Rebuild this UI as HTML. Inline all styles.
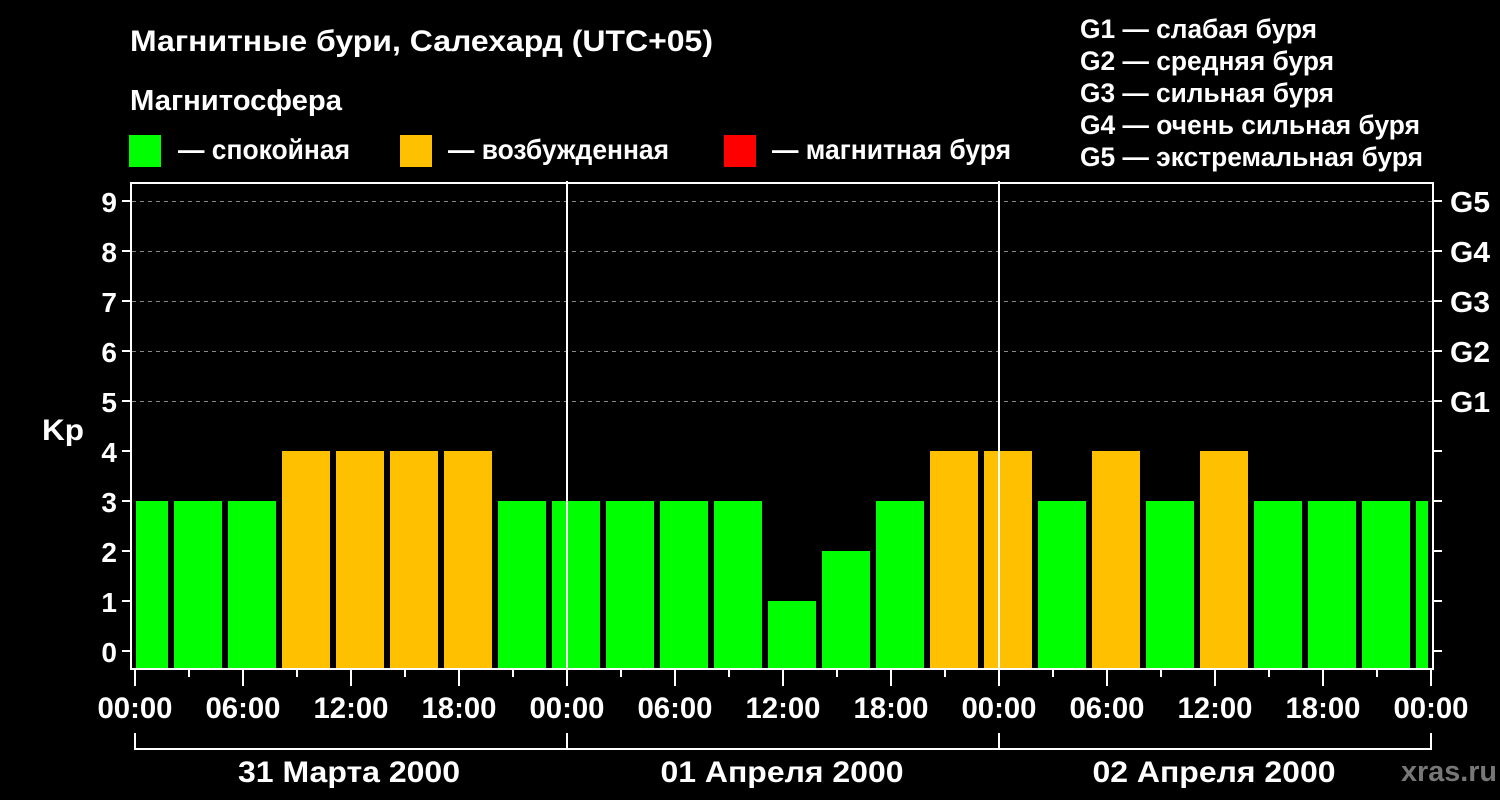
<!DOCTYPE html>
<html><head><meta charset="utf-8"><style>
html,body{margin:0;padding:0;background:#000;width:1500px;height:800px;overflow:hidden}
svg{display:block}
text{font-family:"Liberation Sans",Arial,sans-serif;font-weight:bold;fill:#fff}
</style></head><body>
<svg width="1500" height="800" viewBox="0 0 1500 800" xmlns="http://www.w3.org/2000/svg">
<rect width="1500" height="800" fill="#000"/>
<text x="130" y="51" font-size="30" textLength="583" lengthAdjust="spacingAndGlyphs">Магнитные бури, Салехард (UTC+05)</text>
<text x="130" y="110" font-size="29" textLength="212" lengthAdjust="spacingAndGlyphs">Магнитосфера</text>
<rect x="129" y="135" width="32" height="32" fill="#00ff00"/>
<text x="178" y="159" font-size="28" textLength="172" lengthAdjust="spacingAndGlyphs">— спокойная</text>
<rect x="400" y="135" width="32" height="32" fill="#ffc000"/>
<text x="448" y="159" font-size="28" textLength="221" lengthAdjust="spacingAndGlyphs">— возбужденная</text>
<rect x="724" y="135" width="32" height="32" fill="#ff0000"/>
<text x="772" y="159" font-size="28" textLength="239" lengthAdjust="spacingAndGlyphs">— магнитная буря</text>
<g font-size="27">
<text x="1080" y="38" textLength="237" lengthAdjust="spacingAndGlyphs">G1 — слабая буря</text>
<text x="1080" y="70" textLength="254" lengthAdjust="spacingAndGlyphs">G2 — средняя буря</text>
<text x="1080" y="102" textLength="254" lengthAdjust="spacingAndGlyphs">G3 — сильная буря</text>
<text x="1080" y="134" textLength="340" lengthAdjust="spacingAndGlyphs">G4 — очень сильная буря</text>
<text x="1080" y="166" textLength="343" lengthAdjust="spacingAndGlyphs">G5 — экстремальная буря</text>
</g>
<g stroke="#888" stroke-width="1" stroke-dasharray="4,4">
<line x1="132" y1="201.5" x2="1432" y2="201.5"/>
<line x1="132" y1="251.5" x2="1432" y2="251.5"/>
<line x1="132" y1="301.5" x2="1432" y2="301.5"/>
<line x1="132" y1="351.5" x2="1432" y2="351.5"/>
<line x1="132" y1="401.5" x2="1432" y2="401.5"/>
</g>
<g>
<rect x="136" y="501" width="32" height="167" fill="#00ff00"/>
<rect x="174" y="501" width="48" height="167" fill="#00ff00"/>
<rect x="228" y="501" width="48" height="167" fill="#00ff00"/>
<rect x="282" y="451" width="48" height="217" fill="#ffc000"/>
<rect x="336" y="451" width="48" height="217" fill="#ffc000"/>
<rect x="390" y="451" width="48" height="217" fill="#ffc000"/>
<rect x="444" y="451" width="48" height="217" fill="#ffc000"/>
<rect x="498" y="501" width="48" height="167" fill="#00ff00"/>
<rect x="552" y="501" width="48" height="167" fill="#00ff00"/>
<rect x="606" y="501" width="48" height="167" fill="#00ff00"/>
<rect x="660" y="501" width="48" height="167" fill="#00ff00"/>
<rect x="714" y="501" width="48" height="167" fill="#00ff00"/>
<rect x="768" y="601" width="48" height="67" fill="#00ff00"/>
<rect x="822" y="551" width="48" height="117" fill="#00ff00"/>
<rect x="876" y="501" width="48" height="167" fill="#00ff00"/>
<rect x="930" y="451" width="48" height="217" fill="#ffc000"/>
<rect x="984" y="451" width="48" height="217" fill="#ffc000"/>
<rect x="1038" y="501" width="48" height="167" fill="#00ff00"/>
<rect x="1092" y="451" width="48" height="217" fill="#ffc000"/>
<rect x="1146" y="501" width="48" height="167" fill="#00ff00"/>
<rect x="1200" y="451" width="48" height="217" fill="#ffc000"/>
<rect x="1254" y="501" width="48" height="167" fill="#00ff00"/>
<rect x="1308" y="501" width="48" height="167" fill="#00ff00"/>
<rect x="1362" y="501" width="48" height="167" fill="#00ff00"/>
<rect x="1416" y="501" width="12" height="167" fill="#00ff00"/>
</g>
<g stroke="#fff" stroke-width="2" fill="none">
<rect x="131" y="183" width="1302" height="486"/>
<line x1="567" y1="181" x2="567" y2="669"/>
<line x1="999" y1="181" x2="999" y2="669"/>
</g>
<g stroke="#fff" stroke-width="2">
<line x1="122" y1="651" x2="131" y2="651"/><line x1="1433" y1="651" x2="1442" y2="651"/>
<line x1="122" y1="601" x2="131" y2="601"/><line x1="1433" y1="601" x2="1442" y2="601"/>
<line x1="122" y1="551" x2="131" y2="551"/><line x1="1433" y1="551" x2="1442" y2="551"/>
<line x1="122" y1="501" x2="131" y2="501"/><line x1="1433" y1="501" x2="1442" y2="501"/>
<line x1="122" y1="451" x2="131" y2="451"/><line x1="1433" y1="451" x2="1442" y2="451"/>
<line x1="122" y1="401" x2="131" y2="401"/><line x1="1433" y1="401" x2="1442" y2="401"/>
<line x1="122" y1="351" x2="131" y2="351"/><line x1="1433" y1="351" x2="1442" y2="351"/>
<line x1="122" y1="301" x2="131" y2="301"/><line x1="1433" y1="301" x2="1442" y2="301"/>
<line x1="122" y1="251" x2="131" y2="251"/><line x1="1433" y1="251" x2="1442" y2="251"/>
<line x1="122" y1="201" x2="131" y2="201"/><line x1="1433" y1="201" x2="1442" y2="201"/>
</g>
<g font-size="28" text-anchor="end">
<text x="117" y="662">0</text><text x="117" y="612">1</text><text x="117" y="562">2</text>
<text x="117" y="512">3</text><text x="117" y="462">4</text><text x="117" y="412">5</text>
<text x="117" y="362">6</text><text x="117" y="312">7</text><text x="117" y="262">8</text>
<text x="117" y="212">9</text>
</g>
<text x="42" y="440" font-size="30" textLength="42" lengthAdjust="spacingAndGlyphs">Kp</text>
<g font-size="29">
<text x="1450" y="212" textLength="40" lengthAdjust="spacingAndGlyphs">G5</text><text x="1450" y="262" textLength="40" lengthAdjust="spacingAndGlyphs">G4</text><text x="1450" y="312" textLength="40" lengthAdjust="spacingAndGlyphs">G3</text>
<text x="1450" y="362" textLength="40" lengthAdjust="spacingAndGlyphs">G2</text><text x="1450" y="412" textLength="40" lengthAdjust="spacingAndGlyphs">G1</text>
</g>
<g stroke="#fff" stroke-width="2">
<line x1="135" y1="669" x2="135" y2="686"/><line x1="189" y1="669" x2="189" y2="677"/>
<line x1="243" y1="669" x2="243" y2="686"/><line x1="297" y1="669" x2="297" y2="677"/>
<line x1="351" y1="669" x2="351" y2="686"/><line x1="405" y1="669" x2="405" y2="677"/>
<line x1="459" y1="669" x2="459" y2="686"/><line x1="513" y1="669" x2="513" y2="677"/>
<line x1="567" y1="669" x2="567" y2="686"/><line x1="621" y1="669" x2="621" y2="677"/>
<line x1="675" y1="669" x2="675" y2="686"/><line x1="729" y1="669" x2="729" y2="677"/>
<line x1="783" y1="669" x2="783" y2="686"/><line x1="837" y1="669" x2="837" y2="677"/>
<line x1="891" y1="669" x2="891" y2="686"/><line x1="945" y1="669" x2="945" y2="677"/>
<line x1="999" y1="669" x2="999" y2="686"/><line x1="1053" y1="669" x2="1053" y2="677"/>
<line x1="1107" y1="669" x2="1107" y2="686"/><line x1="1161" y1="669" x2="1161" y2="677"/>
<line x1="1215" y1="669" x2="1215" y2="686"/><line x1="1269" y1="669" x2="1269" y2="677"/>
<line x1="1323" y1="669" x2="1323" y2="686"/><line x1="1377" y1="669" x2="1377" y2="677"/>
<line x1="1431" y1="669" x2="1431" y2="686"/>
<line x1="134" y1="749" x2="1432" y2="749"/>
<line x1="135" y1="733" x2="135" y2="750"/><line x1="567" y1="733" x2="567" y2="750"/>
<line x1="999" y1="733" x2="999" y2="750"/><line x1="1431" y1="733" x2="1431" y2="750"/>
</g>
<g font-size="30" text-anchor="middle">
<text x="135" y="718" textLength="75" lengthAdjust="spacingAndGlyphs">00:00</text><text x="243" y="718" textLength="75" lengthAdjust="spacingAndGlyphs">06:00</text><text x="351" y="718" textLength="75" lengthAdjust="spacingAndGlyphs">12:00</text>
<text x="459" y="718" textLength="75" lengthAdjust="spacingAndGlyphs">18:00</text><text x="567" y="718" textLength="75" lengthAdjust="spacingAndGlyphs">00:00</text><text x="675" y="718" textLength="75" lengthAdjust="spacingAndGlyphs">06:00</text>
<text x="783" y="718" textLength="75" lengthAdjust="spacingAndGlyphs">12:00</text><text x="891" y="718" textLength="75" lengthAdjust="spacingAndGlyphs">18:00</text><text x="999" y="718" textLength="75" lengthAdjust="spacingAndGlyphs">00:00</text>
<text x="1107" y="718" textLength="75" lengthAdjust="spacingAndGlyphs">06:00</text><text x="1215" y="718" textLength="75" lengthAdjust="spacingAndGlyphs">12:00</text><text x="1323" y="718" textLength="75" lengthAdjust="spacingAndGlyphs">18:00</text>
<text x="1431" y="718" textLength="75" lengthAdjust="spacingAndGlyphs">00:00</text>
<text x="349" y="782" textLength="222" lengthAdjust="spacingAndGlyphs">31 Марта 2000</text>
<text x="782" y="782" textLength="243" lengthAdjust="spacingAndGlyphs">01 Апреля 2000</text>
<text x="1214" y="782" textLength="243" lengthAdjust="spacingAndGlyphs">02 Апреля 2000</text>
</g>
<text x="1401" y="781" font-size="29" textLength="96" lengthAdjust="spacingAndGlyphs" style="fill:#777">xras.ru</text>
</svg>
</body></html>
